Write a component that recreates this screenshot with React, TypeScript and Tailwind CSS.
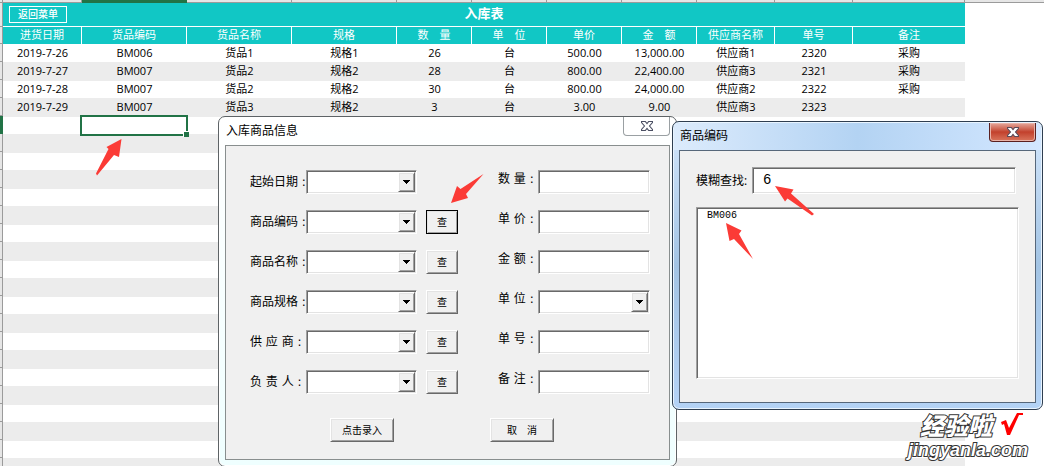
import React from 'react';
import clsx from 'clsx';

const columns = [
  '进货日期',
  '货品编码',
  '货品名称',
  '规格',
  '数　量',
  '单　位',
  '单价',
  '金　额',
  '供应商名称',
  '单号',
  '备注',
];

const records = [
  ['2019-7-26', 'BM006', '货品1', '规格1', '26', '台', '500.00', '13,000.00', '供应商1', '2320', '采购'],
  ['2019-7-27', 'BM007', '货品2', '规格2', '28', '台', '800.00', '22,400.00', '供应商3', '2321', '采购'],
  ['2019-7-28', 'BM007', '货品2', '规格2', '30', '台', '800.00', '24,000.00', '供应商2', '2322', '采购'],
  ['2019-7-29', 'BM007', '货品3', '规格2', '3', '台', '3.00', '9.00', '供应商3', '2323', ''],
];

const ROW_COUNT = 24;
const ACTIVE_ROW = 4;
const ACTIVE_COLUMN = 1;

const leftFields = [
  { id: 'date', label: '起始日期 :', lookup: false },
  { id: 'code', label: '商品编码 :', lookup: true },
  { id: 'name', label: '商品名称 :', lookup: true },
  { id: 'spec', label: '商品规格 :', lookup: true },
  { id: 'supplier', label: '供 应 商 :', lookup: true },
  { id: 'owner', label: '负 责 人 :', lookup: true },
];

const rightFields = [
  { id: 'count', label: '数 量 :', combo: false },
  { id: 'price', label: '单 价 :', combo: false },
  { id: 'amount', label: '金 额 :', combo: false },
  { id: 'unit', label: '单 位 :', combo: true },
  { id: 'number', label: '单 号 :', combo: false },
  { id: 'remark', label: '备 注 :', combo: false },
];

const sunken =
  'appearance-none rounded-none outline-none bg-white border border-t-[#a0a0a0] border-l-[#a0a0a0] border-r-white border-b-white shadow-[inset_1px_1px_0_#696969,inset_-1px_-1px_0_#e3e3e3]';
const raised =
  'bg-[#f0f0f0] border border-t-white border-l-white border-r-[#696969] border-b-[#696969] shadow-[inset_1px_1px_0_#e3e3e3,inset_-1px_-1px_0_#a0a0a0]';

const Combo = ({ id }: { id: string }) => (
  <div className="relative h-6 flex-1">
    <select id={id} className={clsx(sunken, 'h-6 w-full')} />
    <span
      className={clsx(
        raised,
        'pointer-events-none absolute top-[2px] right-[2px] bottom-[2px] flex w-[17px] items-center justify-center'
      )}
    >
      <svg width="7" height="4" viewBox="0 0 7 4" shapeRendering="crispEdges">
        <path d="M0 0h7L3.5 4z" fill="#000" />
      </svg>
    </span>
  </div>
);

const CloseIcon = ({ color }: { color: string }) => (
  <svg width="12" height="10" viewBox="0 0 12 10">
    <path
      d="M.5.5h3.8L6 2.7 7.700.5h3.800v1L8.500 5l3 3.500v1H7.700L6 7.300 4.300 9.500H.5v-1l3-3.500-3-3.500z"
      fill="#fff"
      stroke={color}
      strokeWidth="1.100"
    />
  </svg>
);

const Sheet = () => (
  <table className="w-full table-fixed border-separate border-spacing-0 text-center text-[11px] leading-4 text-black">
    <colgroup>
      <col className="w-[3px]" />
      <col className="w-[79px]" />
      <col className="w-[105px]" />
      <col className="w-[105px]" />
      <col className="w-[105px]" />
      <col className="w-[75px]" />
      <col className="w-[75px]" />
      <col className="w-[75px]" />
      <col className="w-[75px]" />
      <col className="w-[78px]" />
      <col className="w-[78px]" />
      <col className="w-[112px]" />
      <col />
    </colgroup>
    <thead>
      <tr className="h-[3px]">
        <td className="border-r border-b border-[#9b9b9b] bg-[#e6e6e6] p-0" />
        {columns.map((name, i) => (
          <td
            key={name}
            className={clsx(
              'border-r border-b p-0',
              i === ACTIVE_COLUMN
                ? 'border-[#217346] bg-[#217346]'
                : 'border-[#9b9b9b] bg-[#e6e6e6]'
            )}
          />
        ))}
        <td className="border-b border-[#9b9b9b] bg-[#e6e6e6] p-0" />
      </tr>
      <tr className="h-6">
        <td className="border-r border-b border-[#9b9b9b] bg-[#e6e6e6] p-0" />
        <th
          colSpan={11}
          className="border-b border-white bg-[#11c7c5] p-0 pt-px align-top text-white"
        >
          <div className="grid grid-cols-[1fr_auto_1fr] items-start">
            <button
              type="button"
              className="mt-[2px] ml-[6px] h-[17px] w-[58px] border border-white text-[10px] leading-[15px] font-medium"
            >
              返回菜单
            </button>
            <span className="text-[13px] leading-[18px]">入库表</span>
            <span />
          </div>
        </th>
        <td className="p-0" />
      </tr>
      <tr className="h-[17px]">
        <td className="border-r border-b border-[#9b9b9b] bg-[#e6e6e6] p-0" />
        {columns.map((name, i) => (
          <th
            key={name}
            scope="col"
            className={clsx(
              'bg-[#11c7c5] p-0 align-top font-normal whitespace-pre text-white',
              i < columns.length - 1 && 'border-r border-white'
            )}
          >
            {name}
          </th>
        ))}
        <td className="p-0" />
      </tr>
    </thead>
    <tbody>
      {Array.from({ length: ROW_COUNT }, (_, row) => (
        <tr key={row} className="h-[18px]">
          <td
            className={clsx(
              'border-r border-b p-0',
              row === ACTIVE_ROW
                ? 'border-[#217346] bg-[#217346]'
                : 'border-[#9b9b9b] bg-[#e6e6e6]'
            )}
          />
          {columns.map((name, col) => (
            <td
              key={name}
              className={clsx(
                'relative h-[18px] p-0 align-top leading-[18px]',
                row % 2 === 1 && 'bg-[#ececec] shadow-[0_1px_0_#ececec]'
              )}
            >
              {records[row]?.[col]}
              {row === ACTIVE_ROW && col === ACTIVE_COLUMN && (
                <span className="absolute -top-px -right-px -bottom-[2px] -left-[2px] z-10 border-2 border-[#217346] bg-white">
                  <span className="absolute -right-[3px] -bottom-[3px] h-[6px] w-[6px] border-t border-l border-white bg-[#217346]" />
                </span>
              )}
            </td>
          ))}
          <td className="p-0" />
        </tr>
      ))}
    </tbody>
  </table>
);

const EntryDialog = () => (
  <section className="absolute top-[116px] left-[218px] z-20 flex w-[459px] flex-col rounded-[7px] border border-[#5e6366] bg-linear-to-b from-white to-[#efffff] px-[6px] pb-[6px] text-xs shadow-[inset_0_0_0_1px_#ffffff]">
    <header className="flex h-7 items-start justify-between">
      <h2 className="pl-px leading-7">入库商品信息</h2>
      <button
        type="button"
        aria-label="关闭"
        className="flex h-[19px] w-[47px] items-center justify-center rounded-b-[4px] border border-t-0 border-[#9aa0a3] bg-white"
      >
        <CloseIcon color="#4b4f63" />
      </button>
    </header>
    <form className="border border-[#888e8e] bg-[#f0f0f0] pt-6 pr-4 pb-[17px] pl-6 font-['DejaVu_Sans','Noto_Sans_CJK_SC',sans-serif]">
      <div className="flex">
        <div className="flex w-[208px] flex-col gap-4">
          {leftFields.map(({ id, label, lookup }) => (
            <div key={id} className="flex h-6 items-center">
              <label htmlFor={id} className="w-14 whitespace-nowrap">
                {label}
              </label>
              <div className="flex w-[111px]">
                <Combo id={id} />
              </div>
              {lookup && (
                <button
                  type="button"
                  className={clsx(
                    raised,
                    'ml-auto h-6 w-8 pt-[2px] text-[10px]',
                    id === 'code' && 'outline -outline-offset-1 outline-black'
                  )}
                >
                  查
                </button>
              )}
            </div>
          ))}
        </div>
        <div className="ml-10 flex w-[152px] flex-col gap-4">
          {rightFields.map(({ id, label, combo }) => (
            <div key={id} className="flex h-6">
              <label htmlFor={id} className="w-10 leading-[18px] whitespace-nowrap">
                {label}
              </label>
              {combo ? (
                <Combo id={id} />
              ) : (
                <input id={id} type="text" className={clsx(sunken, 'h-6 w-28 px-1')} />
              )}
            </div>
          ))}
        </div>
      </div>
      <div className="mt-6 flex gap-24 pl-20 text-[10px]">
        <button type="submit" className={clsx(raised, 'h-6 w-16 pt-[2px]')}>
          点击录入
        </button>
        <button type="button" className={clsx(raised, 'h-6 w-16 pt-[2px]')}>
          取　消
        </button>
      </div>
    </form>
  </section>
);

const SearchDialog = () => (
  <section className="absolute top-[121px] left-[672px] z-30 flex w-[371px] flex-col rounded-[7px] border border-[#2f3e50] bg-linear-to-b from-[#d3e6fb] via-[#a3c4e4] to-[#b4d3f6] px-[6px] pb-[6px] text-xs shadow-[inset_0_0_0_1px_#e8f4ff]">
    <header className="-mx-[5px] mt-px flex h-[27px] items-start justify-between rounded-t-[6px] bg-linear-to-r from-[#dcebfc] via-[#b3d3f3] to-[#d3e7ff] px-[5px]">
      <h2 className="pl-px leading-[26px]">商品编码</h2>
      <button
        type="button"
        aria-label="关闭"
        className="flex h-[19px] w-[47px] items-center justify-center rounded-b-[4px] border border-t-0 border-[#5a2020] bg-linear-to-b from-[#e3a79c] via-[#c2402c] to-[#d9745c] shadow-[inset_0_0_0_1px_#e9b3a8]"
      >
        <CloseIcon color="#5b4a58" />
      </button>
    </header>
    <form className="border border-[#56677a] bg-[#f0f0f0] px-4 pt-4 pb-[23px]">
      <div className="flex items-center">
        <label htmlFor="keyword" className="w-14 whitespace-nowrap">
          模糊查找:
        </label>
        <input
          id="keyword"
          type="text"
          defaultValue="6"
          className={clsx(
            sunken,
            "mr-[3px] h-[27px] min-w-0 flex-1 px-[10px] pb-[2px] font-['Liberation_Mono',monospace] text-sm"
          )}
        />
      </div>
      <select
        size={8}
        aria-label="查找结果"
        className={clsx(
          sunken,
          "mt-[13px] block h-[172px] w-full bg-none p-0 font-['Liberation_Mono',monospace] text-[10px]"
        )}
      >
        <option className="min-h-0 px-[10px] py-[2px] leading-3">BM006</option>
      </select>
    </form>
  </section>
);

const Arrow = ({ className, points }: { className: string; points: string }) => (
  <svg
    className={clsx('pointer-events-none absolute z-40 h-10 w-10', className)}
    viewBox="0 0 40 40"
  >
    <polygon points={points} fill="#fb3b36" />
  </svg>
);

const Watermark = () => (
  <div className="absolute right-4 bottom-[6px] z-40 flex flex-col items-end font-bold text-white italic [-webkit-text-stroke:2px_#333] [paint-order:stroke_fill]">
    <div className="flex items-start gap-2 pr-1">
      <span className="text-2xl leading-7 font-black">经验啦</span>
      <svg width="24" height="24" viewBox="0 0 24 24">
        <path d="M1 10l5-2 3 8L17 1h6v2h-4L10 23H7L4 12l-2 1z" fill="#f00" />
      </svg>
    </div>
    <span className="font-['Liberation_Sans',sans-serif] text-lg leading-5">jingyanla.com</span>
  </div>
);

const App = () => {
  return (
    <main className="relative h-screen overflow-hidden bg-white font-['Open_Sans','Noto_Sans_CJK_SC',sans-serif] text-black">
      <Sheet />
      <EntryDialog />
      <SearchDialog />
      <Arrow
        className="top-[138px] left-[90px]"
        points="31.500,1 29,19 24,17 7,37.500 6,35.500 18.500,11 16.500,9"
      />
      <Arrow
        className="top-[170px] left-[448px]"
        points="3,33 9,16 12.500,19 35.500,4 18,24 20,28"
      />
      <Arrow
        className="top-[183px] left-[774px]"
        points="1,3 19.500,6.500 17,10.500 40,31 38,32.500 13.500,15.500 11,18.500"
      />
      <Arrow
        className="top-[221px] left-[724px]"
        points="2,2 17.500,9.500 15,13 29,38 10,18 5.500,20"
      />
      <Watermark />
    </main>
  );
};

export default App;
